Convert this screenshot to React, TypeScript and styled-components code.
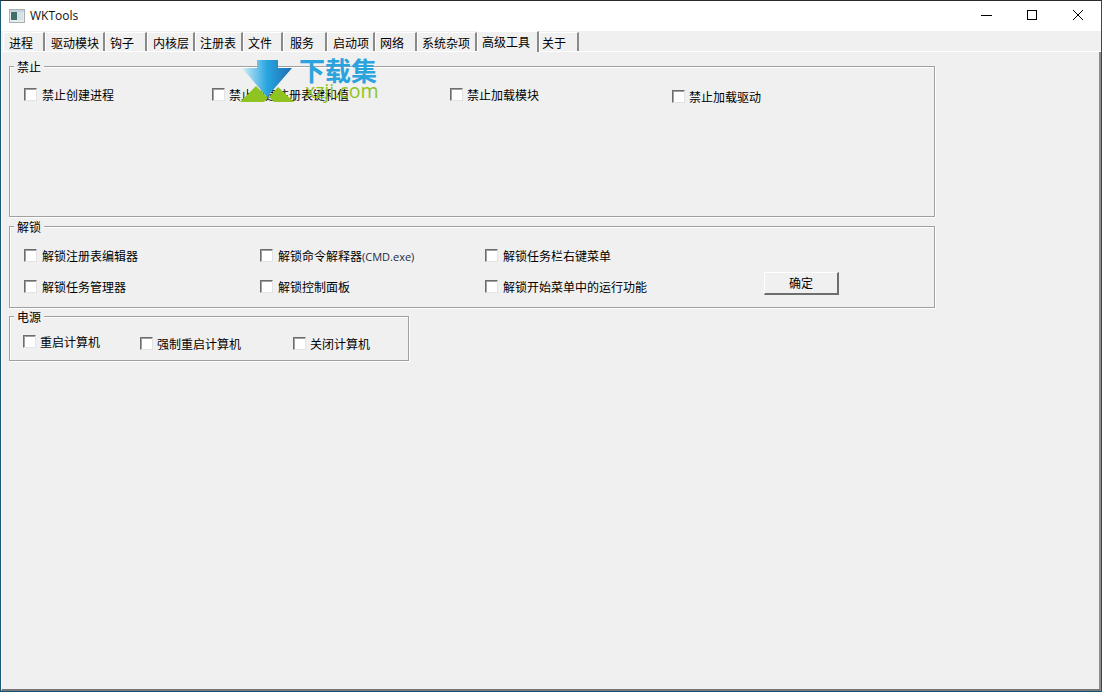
import React from "react";
import styled, { createGlobalStyle } from "styled-components";

const Global = createGlobalStyle`
  html, body { margin: 0; padding: 0; background: #f0f0f0; }
  #root { width: 1102px; height: 692px; }
  * { box-sizing: border-box; }
`;

const FONT = `"Noto Sans CJK SC", "Liberation Sans", sans-serif`;

const Window = styled.div`
  position: relative;
  width: 1102px;
  height: 692px;
  display: flex;
  flex-direction: column;
  overflow: hidden;
  background: #f0f0f0;
  border-top: 1px solid #2b2b2b;
  border-left: 1px solid #1d5a78;
  border-right: 1px solid #1d4f70;
  border-bottom: 1px solid #1d4f70;
  font: 12px/16px ${FONT};
  color: #000;
`;

const TitleBar = styled.div`
  height: 30px;
  flex: none;
  background: #fff;
  display: flex;
  align-items: center;
  padding-left: 8px;
`;

const AppTitle = styled.span`
  margin-left: 5px;
  font: 12px/16px "Open Sans", "Liberation Sans", sans-serif;
  color: #111;
`;

const Spacer = styled.div`
  flex: 1;
`;

const CaptionButton = styled.div`
  width: 46px;
  height: 28px;
  align-self: flex-start;
  display: flex;
  align-items: center;
  justify-content: center;
`;

const TabStrip = styled.div`
  height: 21px;
  flex: none;
  display: flex;
  align-items: flex-end;
  padding-left: 2px;
  border-bottom: 1px solid #fff;
  background: #f0f0f0;
`;

const Tab = styled.div<{ $w: number; $pad: number; $active?: boolean }>`
  width: ${(p) => p.$w}px;
  height: ${(p) => (p.$active ? 21 : 19)}px;
  margin-bottom: ${(p) => (p.$active ? -1 : 0)}px;
  padding: ${(p) => (p.$active ? 0 : 2)}px 0 0 ${(p) => p.$pad}px;
  display: flex;
  align-items: center;
  white-space: nowrap;
  background: #f0f0f0;
  border-top: 1px solid #fff;
  border-left: 1px solid #fff;
  border-right: 2px solid #8a8a8a;
`;

const Body = styled.div`
  flex: 1;
  padding: 14px 0 0 7px;
  display: flex;
  flex-direction: column;
  align-items: flex-start;
  gap: 8px;
  border-left: 1px solid #fff;
  border-right: 2px solid #8c8c8c;
  border-bottom: 2px solid #777;
`;

const Group = styled.div<{ $w: number; $h: number; $pt: number; $mt?: number }>`
  position: relative;
  width: ${(p) => p.$w}px;
  height: ${(p) => p.$h}px;
  margin-top: ${(p) => p.$mt ?? 0}px;
  padding: ${(p) => p.$pt}px 0 0 14px;
  border: 1px solid #a0a0a0;
  box-shadow: 1px 1px 0 #fff, inset 1px 1px 0 #fff;
`;

const Legend = styled.span`
  position: absolute;
  top: -8px;
  left: 4px;
  padding: 0 3px;
  background: #f0f0f0;
  line-height: 16px;
`;

const Row = styled.div<{ $gap?: number; $shift?: number }>`
  display: flex;
  align-items: flex-start;
  margin-bottom: ${(p) => p.$gap ?? 0}px;
  margin-left: ${(p) => p.$shift ?? 0}px;
`;

const Check = styled.label<{ $w?: number; $dy?: number; $text?: number }>`
  display: flex;
  align-items: center;
  gap: ${(p) => p.$text ?? 5}px;
  flex: none;
  width: ${(p) => (p.$w ? `${p.$w}px` : "auto")};
  margin-top: ${(p) => p.$dy ?? 0}px;
  height: 16px;
  white-space: nowrap;
`;

const Box = styled.span`
  width: 13px;
  height: 13px;
  margin-bottom: 2px;
  flex: none;
  background: #fff;
  border-top: 1px solid #6d6d6d;
  border-left: 1px solid #6d6d6d;
  border-right: 1px solid #e3e3e3;
  border-bottom: 1px solid #e3e3e3;
  box-shadow: inset 1px 1px 0 #a0a0a0;
`;

const Latin = styled.span`
  font-family: "Open Sans", "Liberation Sans", sans-serif;
  font-size: 11px;
  color: #1d2a44;
`;

const OkButton = styled.div`
  width: 75px;
  height: 23px;
  flex: none;
  margin-top: -7px;
  padding-bottom: 1px;
  display: flex;
  align-items: center;
  justify-content: center;
  background: #f0f0f0;
  border-top: 1px solid #fff;
  border-left: 1px solid #fff;
  border-right: 2px solid #6d6d6d;
  border-bottom: 2px solid #6d6d6d;
`;

const Watermark = styled.div`
  position: absolute;
  left: 239px;
  top: 57px;
  width: 142px;
  height: 46px;
  pointer-events: none;
`;

const WatermarkArrow = styled.svg`
  position: absolute;
  left: 0;
  top: 0;
`;

const WatermarkCn = styled.span`
  position: absolute;
  left: 59px;
  top: -2px;
  font: 700 26px/28px ${FONT};
  color: #2ba3dc;
  white-space: nowrap;
`;

const WatermarkEn = styled.span`
  position: absolute;
  left: 65px;
  top: 21px;
  font: 400 19.5px/24px "Open Sans", "Liberation Sans", sans-serif;
  color: #8fc31f;
  white-space: nowrap;
`;

const TABS: [string, number, number][] = [
  ["进程", 42, 5],
  ["驱动模块", 60, 5],
  ["钩子", 42, 4],
  ["内核层", 48, 5],
  ["注册表", 48, 4],
  ["文件", 40, 4],
  ["服务", 44, 6],
  ["启动项", 48, 5],
  ["网络", 42, 4],
  ["系统杂项", 60, 4],
];

const C = ({ w, dy, text, children }: { w?: number; dy?: number; text?: number; children: React.ReactNode }) => (
  <Check $w={w} $dy={dy} $text={text}>
    <Box />
    <span>{children}</span>
  </Check>
);

export default function App() {
  return (
    <>
      <Global />
      <Window>
        <TitleBar>
          <svg width="16" height="14" viewBox="0 0 16 14">
            <rect x="0.5" y="0.5" width="15" height="13" fill="#e8ecec" stroke="#a9b0b0" />
            <rect x="2" y="3" width="6" height="8" fill="#3f6f68" />
            <rect x="8" y="3" width="6" height="8" fill="#d7e0e6" />
            <rect x="1" y="1" width="14" height="2" fill="#c7d3da" />
          </svg>
          <AppTitle>WKTools</AppTitle>
          <Spacer />
          <CaptionButton>
            <svg width="11" height="11" viewBox="0 0 11 11">
              <path d="M0 5.5H11" stroke="#000" strokeWidth="1" />
            </svg>
          </CaptionButton>
          <CaptionButton>
            <svg width="10" height="10" viewBox="0 0 10 10">
              <rect x="0.5" y="0.5" width="9" height="9" fill="none" stroke="#000" />
            </svg>
          </CaptionButton>
          <CaptionButton>
            <svg width="10" height="10" viewBox="0 0 10 10">
              <path d="M0 0L10 10M10 0L0 10" stroke="#000" strokeWidth="1" />
            </svg>
          </CaptionButton>
        </TitleBar>
        <TabStrip>
          {TABS.map(([t, w, pad]) => (
            <Tab key={t} $w={w} $pad={pad}>{t}</Tab>
          ))}
          <Tab $w={62} $pad={4} $active>高级工具</Tab>
          <Tab $w={40} $pad={2}>关于</Tab>
        </TabStrip>
        <Body>
          <Group $w={926} $h={151} $pt={20}>
            <Legend>禁止</Legend>
            <Row>
              <C w={188}>禁止创建进程</C>
              <C w={238} text={4}>禁止创建注册表键和值</C>
              <C w={222} text={4}>禁止加载模块</C>
              <C dy={2} text={4}>禁止加载驱动</C>
            </Row>
          </Group>
          <Group $w={926} $h={82} $pt={21} $mt={1}>
            <Legend>解锁</Legend>
            <Row $gap={15}>
              <C w={236}>解锁注册表编辑器</C>
              <C w={225}>解锁命令解释器<Latin>(CMD.exe)</Latin></C>
              <C>解锁任务栏右键菜单</C>
            </Row>
            <Row>
              <C w={236}>解锁任务管理器</C>
              <C w={225}>解锁控制面板</C>
              <C w={279}>解锁开始菜单中的运行功能</C>
              <OkButton>确定</OkButton>
            </Row>
          </Group>
          <Group $w={400} $h={45} $pt={17}>
            <Legend>电源</Legend>
            <Row $shift={-1}>
              <C w={117} text={4}>重启计算机</C>
              <C w={153} dy={2} text={4}>强制重启计算机</C>
              <C dy={2} text={4}>关闭计算机</C>
            </Row>
          </Group>
        </Body>
        <Watermark>
          <WatermarkArrow width="56" height="46" viewBox="0 0 56 46">
            <defs>
              <linearGradient id="wmArrow" x1="0" x2="1" y1="0" y2="0">
                <stop offset="0" stopColor="#d6eef9" />
                <stop offset="0.5" stopColor="#27a5df" />
                <stop offset="1" stopColor="#1e6cb0" />
              </linearGradient>
            </defs>
            <path d="M17 2H38V10H52L27 39L2 10H17Z" fill="url(#wmArrow)" />
            <path d="M0 44L16 28L28 40L24 44Z" fill="#8fc31f" />
            <path d="M29 39L38 29L54 44H34Z" fill="#8fc31f" />
          </WatermarkArrow>
          <WatermarkCn>下载集</WatermarkCn>
          <WatermarkEn>xzji.com</WatermarkEn>
        </Watermark>
      </Window>
    </>
  );
}
